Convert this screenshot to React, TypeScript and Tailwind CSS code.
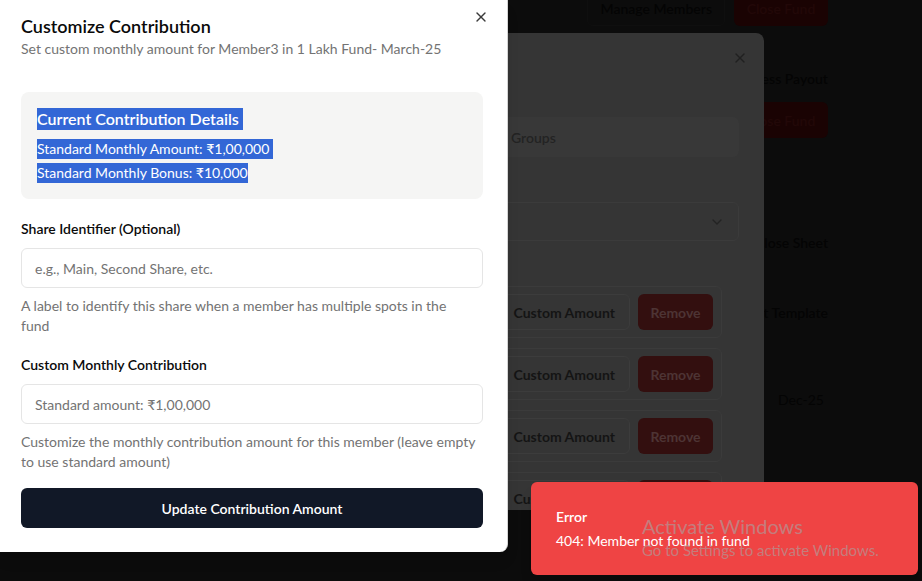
import React from "react";
import { X, ChevronDown } from "lucide-react";

const font = "font-['Lato','Noto_Sans',sans-serif]";

function MemberRow() {
  return (
    <div className="flex h-[52px] shrink-0 items-center justify-end gap-[8px] rounded-md border border-[#3b3b3b] pr-[8px]">
      <div className="flex h-[36px] items-center rounded-md border border-[#3c3c3c] px-[14px] text-[14px] font-bold text-[#141414]">
        Custom Amount
      </div>
      <div className="flex h-[36px] w-[75px] items-center justify-center rounded-md bg-[#330f0f] text-[14px] font-bold text-[#4d3434]">
        Remove
      </div>
    </div>
  );
}

export default function App() {
  return (
    <div className={`relative h-[581px] w-[922px] overflow-hidden bg-[#0c0c0c] ${font}`}>
      {/* Dimmed page behind the dialogs */}
      <div className="ml-auto mr-[94px] flex w-[320px] flex-col items-end text-[14px] font-semibold text-[#040404]">
        <div className="-mt-[10px] flex items-center gap-[9px]">
          <div className="flex h-[36px] items-center rounded-md border border-[#0f0f0f] px-[12px]">
            Manage Members
          </div>
          <div className="flex h-[36px] w-[94px] items-center justify-center rounded-md bg-[#1a0303] text-[#220808]">
            Close Fund
          </div>
        </div>
        <div className="mt-[32px] flex h-[40px] items-center">Process Payout</div>
        <div className="mt-[4px] flex h-[36px] w-[94px] items-center justify-center rounded-md bg-[#1a0303] text-[#220808]">
          Close Fund
        </div>
        <div className="mt-[84px] flex h-[40px] items-center">Close Sheet</div>
        <div className="mt-[30px] flex h-[40px] items-center">Export Template</div>
        <div className="mt-[57px] flex h-[20px] items-center pr-[4px] font-normal">Dec-25</div>
      </div>

      {/* Second dialog (underneath) */}
      <div className="absolute left-[330px] top-[33px] flex h-[477px] w-[434px] flex-col overflow-hidden rounded-lg bg-[#353535] pl-[24px] pr-[25px] pt-[17px]">
        <div className="-mr-[9px] flex h-[16px] shrink-0 justify-end">
          <X className="h-4 w-4 text-[#202020]" strokeWidth={2} />
        </div>
        <div className="mt-[51px] flex h-[40px] shrink-0 rounded-md bg-[#383838] text-[14px] font-semibold text-[#232323]">
          <div className="flex-1" />
          <div className="flex w-[236px] items-center pl-[8px]">Groups</div>
        </div>
        <div className="mt-[45px] flex h-[39px] shrink-0 items-center justify-end rounded-md border border-[#3b3b3b] pr-[13px]">
          <ChevronDown className="h-4 w-4 text-[#232323]" />
        </div>
        <div className="mt-[45px] flex shrink-0 flex-col gap-[10px] pr-[17px]">
          <MemberRow />
          <MemberRow />
          <MemberRow />
          <MemberRow />
        </div>
      </div>

      {/* Front dialog */}
      <div className="absolute left-0 top-0 flex h-[552px] w-[508px] flex-col rounded-br-lg border-r border-[#d4d4d4] bg-white pl-[21px] pr-[24px] pt-[14px] shadow-lg">
        <button className="absolute right-[18px] top-[9px] text-[#3a3a3a]">
          <X className="h-4 w-4" strokeWidth={2} />
        </button>
        <h2 className="text-[18px] font-semibold leading-6 text-[#0a0a0a]">Customize Contribution</h2>
        <p className="mt-[1px] text-[14px] leading-5 text-[#737373]">
          Set custom monthly amount for Member3 in 1 Lakh Fund- March-25
        </p>

        <div className="mt-[33px] flex flex-col items-start rounded-lg bg-[#f5f5f4] px-[16px] py-[16px]">
          <h3 className="bg-[#3367d6] pr-[4px] text-[16px] font-semibold leading-[22px] text-white">
            Current Contribution Details
          </h3>
          <p className="mt-[9px] bg-[#3367d6] pr-[4px] text-[14px] leading-5 text-white">
            Standard Monthly Amount: ₹1,00,000
          </p>
          <p className="mt-[4px] bg-[#3367d6] text-[14px] leading-5 text-white">
            Standard Monthly Bonus: ₹10,000
          </p>
        </div>

        <label className="mt-[20px] text-[14px] font-semibold leading-5 text-[#0a0a0a]">
          Share Identifier (Optional)
        </label>
        <div className="mt-[9px] flex h-[40px] items-center rounded-md border border-[#e5e5e5] px-[13px] text-[14px] text-[#737373]">
          e.g., Main, Second Share, etc.
        </div>
        <p className="mt-[8px] text-[14px] leading-5 text-[#737373]">
          A label to identify this share when a member has multiple spots in the
          <br />
          fund
        </p>

        <label className="mt-[19px] text-[14px] font-semibold leading-5 text-[#0a0a0a]">
          Custom Monthly Contribution
        </label>
        <div className="mt-[9px] flex h-[40px] items-center rounded-md border border-[#e5e5e5] px-[13px] text-[14px] text-[#737373]">
          Standard amount: ₹1,00,000
        </div>
        <p className="mt-[8px] text-[14px] leading-5 text-[#737373]">
          Customize the monthly contribution amount for this member (leave empty to use standard amount)
        </p>

        <button className="mt-[16px] flex h-[40px] items-center justify-center rounded-md bg-[#111827] text-[14px] font-semibold text-white">
          Update Contribution Amount
        </button>
      </div>

      {/* Toast */}
      <div className="absolute left-[531px] top-[482px] flex h-[93px] w-[387px] flex-col rounded-md bg-[#ef4444] px-[25px] pt-[25px] text-white shadow-lg">
        <div className="text-[14px] font-semibold leading-5">Error</div>
        <div className="mt-[4px] text-[14px] leading-5">404: Member not found in fund</div>
      </div>

      {/* Windows watermark */}
      <div className="pointer-events-none absolute left-[642px] top-[512px] flex flex-col text-[rgba(165,165,165,0.6)]">
        <span className="text-[20px] leading-7">Activate Windows</span>
        <span className="text-[15px] leading-5">Go to Settings to activate Windows.</span>
      </div>
    </div>
  );
}
